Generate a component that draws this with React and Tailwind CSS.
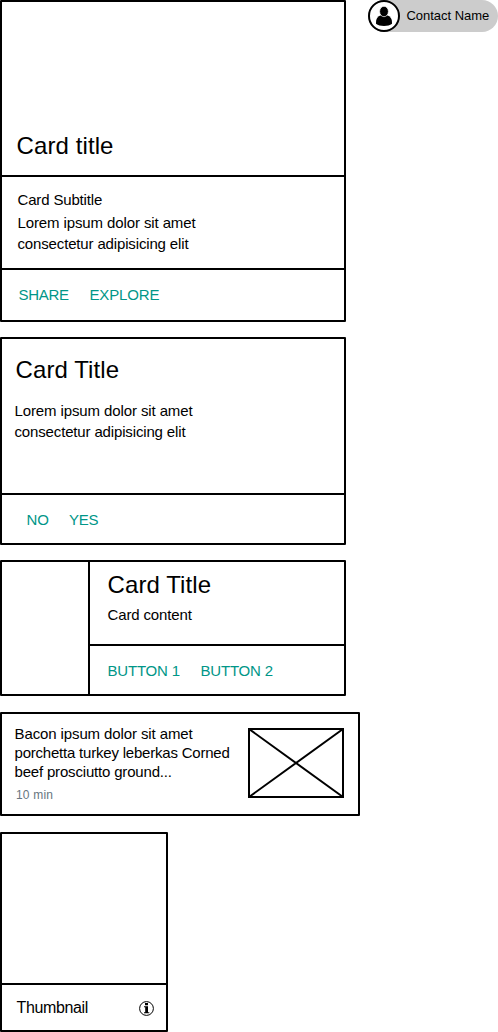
const card = "flex flex-col rounded-[1px] border-2 border-black";
const title = "text-[24px] leading-[27px] whitespace-nowrap tracking-[0.1px]";
const body = "text-[15px] whitespace-nowrap";
const action = "text-[15px] leading-[17px] whitespace-nowrap text-[#009688]";

function MediaCard() {
  return (
    <section className={`${card} h-[322px] w-[346px]`}>
      <div className="h-[173px] pt-[130px] pl-[14.5px]">
        <h2 className={title}>Card title</h2>
      </div>
      <div className="h-[95px] border-y-2 border-black pt-[14px] pl-[15.5px]">
        <p className={`${body} leading-[17px] tracking-[-0.16px]`}>Card Subtitle</p>
        <p className={`${body} mt-[4px] leading-[21px] tracking-[-0.11px]`}>
          Lorem ipsum dolor sit amet
          <br />
          <span className="tracking-[-0.15px]">consectetur adipisicing elit</span>
        </p>
      </div>
      <div className="flex pt-[16px] pl-[16.5px]">
        <button className={`${action} w-[71px] text-left tracking-[-0.3px]`}>SHARE</button>
        <button className={`${action} tracking-[-0.14px]`}>EXPLORE</button>
      </div>
    </section>
  );
}

function TextCard() {
  return (
    <section className={`${card} mt-[15px] h-[208px] w-[346px]`}>
      <div className="h-[156px] border-b-2 border-black pt-[17px] pl-[12.5px]">
        <h2 className={`${title} pl-px`}>Card Title</h2>
        <p className={`${body} mt-[17px] leading-[21px] tracking-[-0.11px]`}>
          Lorem ipsum dolor sit amet
          <br />
          <span className="tracking-[-0.15px]">consectetur adipisicing elit</span>
        </p>
      </div>
      <div className="flex pt-[16px] pl-[24.5px]">
        <button className={`${action} w-[42.5px] text-left tracking-[-0.2px]`}>NO</button>
        <button className={`${action} tracking-[-0.3px]`}>YES</button>
      </div>
    </section>
  );
}

function SideCard() {
  return (
    <section className="mt-[15px] flex h-[136px] w-[346px] rounded-[1px] border-2 border-black">
      <div className="w-[88px] border-r-2 border-black" />
      <div className="flex-1">
        <div className="h-[84px] border-b-2 border-black pt-[9px] pl-[17.5px]">
          <h2 className={title}>Card Title</h2>
          <p className={`${body} mt-[8px] leading-[17px] tracking-[-0.14px]`}>Card content</p>
        </div>
        <div className="flex pt-[16px] pl-[17.5px]">
          <button className={`${action} w-[93px] text-left tracking-[-0.2px]`}>BUTTON 1</button>
          <button className={`${action} tracking-[-0.2px]`}>BUTTON 2</button>
        </div>
      </div>
    </section>
  );
}

function NewsCard() {
  return (
    <section className="mt-[16px] flex h-[104px] w-[360px] rounded-[1px] border-2 border-black">
      <div className="w-[246px] pt-[10px] pl-[12.5px]">
        <p className={`${body} leading-[19px] tracking-[-0.11px]`}>
          Bacon ipsum dolor sit amet
          <br />
          <span className="tracking-[-0.21px]">porchetta turkey leberkas Corned</span>
          <br />
          <span className="tracking-[-0.18px]">beef prosciutto ground...</span>
        </p>
        <p className="mt-[7px] pl-[1.5px] text-[12px] leading-[14px] tracking-[0.2px] text-[#687680]">10 min</p>
      </div>
      <svg className="mt-[14px] h-[70px] w-[96px]" viewBox="0 0 96 70" fill="none" stroke="black" strokeWidth="2">
        <path d="M1 1h94v68H1zM1 1l94 68M95 1L1 69" />
      </svg>
    </section>
  );
}

function ThumbnailCard() {
  return (
    <section className={`${card} mt-[16px] h-[200px] w-[168px]`}>
      <div className="h-[151px] border-b-2 border-black" />
      <div className="flex justify-between pt-[14px] pr-[12px] pl-[14.5px]">
        <span className="text-[16px] leading-[18px] tracking-[-0.36px]">Thumbnail</span>
        <svg className="mt-[2px] h-[15px] w-[15px]" viewBox="0 0 15 15">
          <circle cx="7.5" cy="7.5" r="6.9" fill="none" stroke="black" strokeWidth="1" />
          <path d="M6 2h3v2.2H6zM5 5.2h4v6H10.3v1H5v-1h1.2V6.3H5z" />
        </svg>
      </div>
    </section>
  );
}

function ContactChip() {
  return (
    <div className="ml-auto flex h-[32px] w-[130px] rounded-full bg-[#cccccc]">
      <svg className="h-[32px] w-[32px]" viewBox="0 0 32 32">
        <circle cx="16" cy="16" r="15" fill="white" stroke="black" strokeWidth="2" />
        <path d="M12.3 15.6C9.3 16.8 8 19.2 8 22.4v1.4c2 1.5 4.6 2.2 8 2.2s6-.7 8-2.2v-1.4c0-3.2-1.3-5.6-4.3-6.8z" />
        <ellipse cx="16" cy="11.5" rx="4.4" ry="5.2" stroke="white" strokeWidth="0.7" />
      </svg>
      <span className="mt-[8px] ml-[6.5px] text-[13px] leading-[15px] tracking-[-0.03px] whitespace-nowrap">Contact Name</span>
    </div>
  );
}

export default function App() {
  return (
    <main className="flex h-[1032px] w-[498px] items-start overflow-hidden bg-white font-['Liberation_Sans',Arial,sans-serif] text-black">
      <div className="flex flex-col">
        <MediaCard />
        <TextCard />
        <SideCard />
        <NewsCard />
        <ThumbnailCard />
      </div>
      <ContactChip />
    </main>
  );
}
